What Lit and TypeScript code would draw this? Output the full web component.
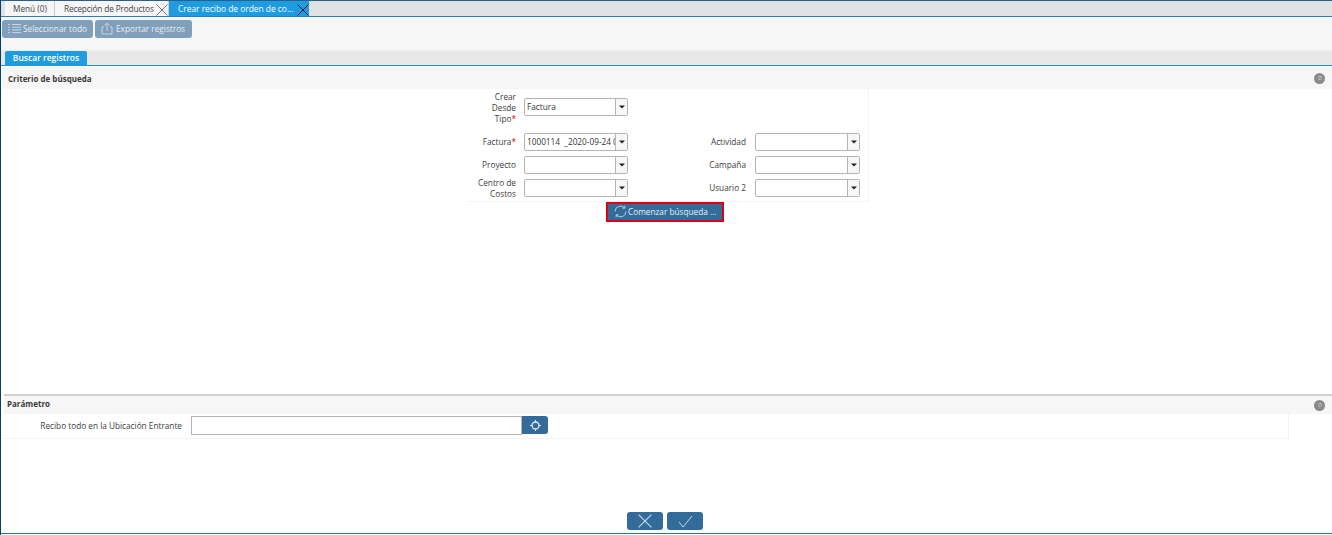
import { LitElement, html, css } from "lit";
import { customElement } from "lit/decorators.js";

const arrow = html`<svg class="ar" width="6" height="4" viewBox="0 0 6 4"><path d="M0 0.5h6L3 3.500z" fill="#222"/></svg>`;
const x = (c: string, s = 12) => html`<svg width=${s} height=${s} viewBox="0 0 12 12"><path d="M.5.5l11 11M11.500.5l-11 11" stroke=${c} stroke-width="1" fill="none"/></svg>`;

@customElement("app-root")
export class AppRoot extends LitElement {
  static styles = css`
    :host { display: block; width: 1332px; height: 535px; overflow: hidden; background: #fff; font-family: "Open Sans", sans-serif; font-size: 8.25px; color: #333; }
    * { box-sizing: border-box; }
    .page { height: 535px; display: flex; flex-direction: column; border-left: 1px solid #00406f; }
    .tabs { height: 17px; flex: none; display: flex; background: #dfe3e6; border-top: 1px solid #2a5f88; border-bottom: 1px solid #2a7fb5; padding-left: 4px; }
    .tab { display: flex; align-items: center; background: #f6f6f6; height: 15px; padding: 0 0 1px 8px; border-right: 1px solid #ccc; color: #444; white-space: nowrap; position: relative; }
    .tab.t1 { width: 50px; }
    .tab.t2 { width: 114px; letter-spacing: -0.13px; padding-left: 9px; }
    .tab.t3 { width: 140px; background: #1f9ce0; color: #fff; border: 0; padding-left: 9px; font-size: 8.4px; }
    .tab svg { position: absolute; right: 0; top: 3px; }
    .toolbar { height: 33px; flex: none; background: #f6f6f6; display: flex; gap: 2px; padding: 3px 0 0 1px; }
    .tb { height: 18px; background: #7f9fba; border-radius: 3px; color: #e8eef3; display: flex; align-items: center; gap: 2px; padding: 0 6px 1px 6px; white-space: nowrap; }
    .tb.a { width: 91px; }
    .tb.b { width: 97px; gap: 3px; }
    .subtabs { height: 16px; flex: none; background: #e8e8e8; border-top: 1px solid #eee; border-bottom: 1px solid #1f8fd0; padding-left: 4px; display: flex; }
    .subtab { width: 82px; height: 15px; background: #1f9ce0; color: #fff; font-weight: 600; font-size: 8.5px; display: flex; align-items: center; justify-content: center; border-radius: 2px 2px 0 0; padding-bottom: 2px; }
    .head { flex: none; background: #f6f6f6; margin: 1px 0 0 1px; display: flex; align-items: center; justify-content: space-between; padding: 0 7px 0 6px; font-weight: 700; color: #3a3a3a; font-size: 8px; }
    .head.h1 { height: 22px; }
    .head.h2 { height: 18px; margin: 0 0 0 3px; padding-left: 3px; }
    .head.h2 .t { padding-bottom: 3px; }
    .knob { width: 11px; height: 11px; border-radius: 50%; background: #8a8a8a; display: flex; align-items: center; justify-content: center; }
    .knob i { width: 4px; height: 4px; border-radius: 50%; border: 1px dotted #eee; }
    .search { height: 305px; flex: none; display: flex; flex-direction: column; align-items: center; }
    .form { width: 402px; height: 113px; margin-left: 3px; border-right: 1px solid #f2f2f2; border-bottom: 1px solid #f4f4f4; display: grid; grid-template-columns: 48px 104px 111px 105px; grid-template-rows: 39px 23px 23px 23px; column-gap: 8px; justify-content: start; padding: 2px 0 0 1px; align-content: start; }
    .lab { text-align: right; line-height: 11px; align-self: center; color: #3c3c3c; }
    .lab.r { margin-right: 1px; }
    .lab b { color: #d00; font-weight: 400; }
    .lab.top { align-self: start; }
    .field { height: 18px; width: 100%; display: flex; border: 1px solid #b4b4b4; border-radius: 2px; background: #fff; align-self: center; }
    .field.top { align-self: start; margin-top: 7px; }
    .val { flex: 1; min-width: 0; overflow: hidden; white-space: pre; padding-left: 2px; line-height: 15px; color: #333; }
    .drop { width: 12px; flex: none; border-left: 1px solid #b4b4b4; background: #f7f7f7; display: flex; align-items: center; justify-content: center; }
    .go { width: 118px; height: 20px; flex: none; background: #336b9b; border: 2px solid #e00012; color: #e8f0f6; display: flex; align-items: center; gap: 1px; padding: 0 0 1px 6px; margin-right: 3px; white-space: nowrap; }
    .param { height: 98px; flex: none; display: flex; flex-direction: column; }
    .split { height: 2px; flex: none; margin-left: 3px; background: #cfcfcb; }
    .prow { width: 1286px; height: 25px; margin-left: 2px; border-right: 1px solid #f2f2f2; border-bottom: 1px solid #f4f4f4; display: flex; align-items: flex-start; padding-top: 2px; }
    .plab { width: 179px; text-align: right; line-height: 19px; color: #3c3c3c; }
    .pinp { width: 331px; height: 19px; margin-left: 9px; border: 1px solid #b4b4b4; background: #fff; }
    .pbtn { width: 26px; height: 18px; background: #336b9b; border-radius: 0 3px 3px 0; display: flex; align-items: center; justify-content: center; }
    .foot { flex: 1; display: flex; flex-direction: column; }
    .actions { flex: none; display: flex; justify-content: center; gap: 4px; padding: 18px 3px 0 0; }
    .act { width: 36px; height: 18px; background: #336b9b; border-radius: 3px; display: flex; align-items: center; justify-content: center; }
    .rule { margin-top: 3px; height: 1px; background: #2d6e9e; }
  `;

  field(v: string, cls = "") {
    return html`<div class="field ${cls}"><div class="val">${v}</div><div class="drop">${arrow}</div></div>`;
  }

  render() {
    return html`<div class="page">
      <div class="tabs">
        <div class="tab t1">Menú (0)</div>
        <div class="tab t2">Recepción de Productos${x("#777")}</div>
        <div class="tab t3">Crear recibo de orden de co...${x("#123")}</div>
      </div>
      <div class="toolbar">
        <div class="tb a"><svg width="13" height="11" viewBox="0 0 13 11"><path d="M0 1.500h2M4 1.500h9M0 4.200h2M4 4.200h9M0 6.900h2M4 6.900h9M0 9.600h2M4 9.600h9" stroke="#c9d6e1" fill="none"/></svg>Seleccionar todo</div>
        <div class="tb b"><svg width="12" height="13" viewBox="0 0 12 13"><path d="M3 5H1v7h10V5H9M6 9V1M3.500 3.500L6 1l2.500 2.500" stroke="#c9d6e1" fill="none"/></svg>Exportar registros</div>
      </div>
      <div class="subtabs"><div class="subtab">Buscar registros</div></div>
      <div class="head h1">Criterio de búsqueda<span class="knob"><i></i></span></div>
      <div class="search">
        <div class="form">
          <div class="lab top">Crear<br />Desde<br />Tipo<b>*</b></div>${this.field("Factura", "top")}<div></div><div></div>
          <div class="lab">Factura<b>*</b></div>${this.field("1000114  _2020-09-24 00:00:00")}<div class="lab r">Actividad</div>${this.field("")}
          <div class="lab">Proyecto</div>${this.field("")}<div class="lab r">Campaña</div>${this.field("")}
          <div class="lab">Centro de<br />Costos</div>${this.field("")}<div class="lab r">Usuario 2</div>${this.field("")}
        </div>
        <div class="go"><svg width="13" height="13" viewBox="0 0 13 13"><path d="M1 6.500A5.500 5.500 0 0 1 10.500 2.800M12 6.500A5.500 5.500 0 0 1 2.500 10.200M10.800 .8v2.400H8.400M2.200 12.200V9.800h2.400" stroke="#b9d0e2" fill="none"/></svg>Comenzar búsqueda ...</div>
      </div>
      <div class="split"></div>
      <div class="param">
        <div class="head h2"><span class="t">Parámetro</span><span class="knob"><i></i></span></div>
        <div class="prow">
          <div class="plab">Recibo todo en la Ubicación Entrante</div>
          <div class="pinp"></div>
          <div class="pbtn"><svg width="11" height="11" viewBox="0 0 11 11"><circle cx="5.500" cy="5.500" r="3.500" stroke="#dfe9f1" stroke-width="1.300" fill="none"/><path d="M5.500 0v2.500M5.500 8.500V11M0 5.500h2.500M8.500 5.500H11" stroke="#dfe9f1"/></svg></div>
        </div>
      </div>
      <div class="foot">
        <div class="actions">
          <div class="act">${x("#c5d7e6", 14)}</div>
          <div class="act"><svg width="15" height="13" viewBox="0 0 15 13"><path d="M1 7l4 5L14 1" stroke="#c5d7e6" fill="none"/></svg></div>
        </div>
        <div class="rule"></div>
      </div>
    </div>`;
  }
}
